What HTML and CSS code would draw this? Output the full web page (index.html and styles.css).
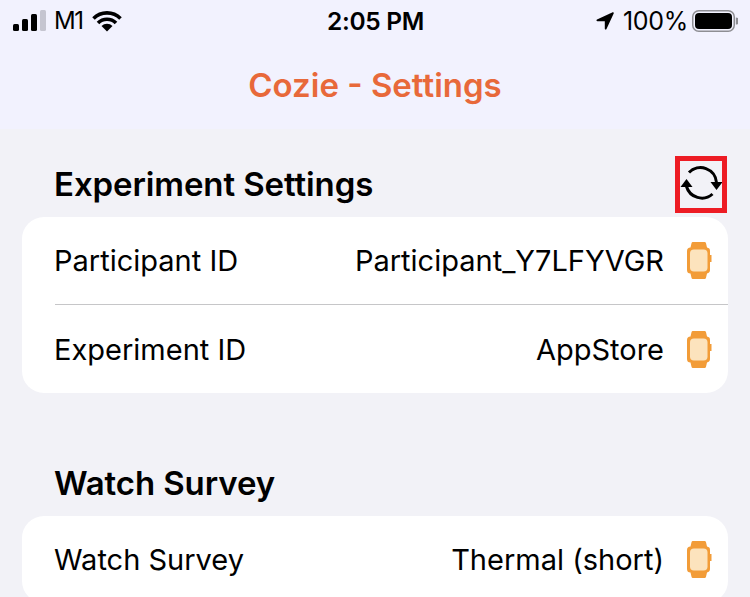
FILE: index.html
```html
<!DOCTYPE html>
<html lang="en">
<head>
    <meta charset="UTF-8">
    <title>Cozie - Settings</title>
    <link rel="stylesheet" href="styles.css">
</head>
<body>
    <svg class="defs" width="0" height="0">
        <symbol id="watch" viewBox="0 0 25 37">
            <path d="M6 0h11.500a1.500 1.500 0 0 1 1.500 1.200l1 4.300a3.500 3.500 0 0 1 3 3.500v4h1.500v7H23v8a3.500 3.500 0 0 1-3 3.500l-1 4.300a1.500 1.500 0 0 1-1.500 1.200H6a1.500 1.500 0 0 1-1.500-1.200l-1-4.300a3.500 3.500 0 0 1-3.500-3.500V9a3.500 3.500 0 0 1 3.500-3.500l1-4.300A1.500 1.500 0 0 1 6 0z" fill="#f29c38"/>
            <rect x="3" y="7.500" width="17.500" height="22" rx="4" fill="#fce3bd"/>
        </symbol>
    </svg>

    <header class="top">
        <div class="status">
            <div class="status-left">
                <svg class="signal" width="33" height="21" viewBox="0 0 33 21">
                    <rect x="0" y="14" width="6" height="7" rx="1.500" fill="#000"/>
                    <rect x="9" y="9" width="6" height="12" rx="1.500" fill="#000"/>
                    <rect x="18" y="4" width="6" height="17" rx="1.500" fill="#000"/>
                    <rect x="27" y="0" width="6" height="21" rx="1.500" fill="#c5c5d0"/>
                </svg>
                <span class="carrier">M1</span>
                <svg class="wifi" width="30" height="22" viewBox="0 0 30 22">
                    <path d="M1.500 8.500a19 19 0 0 1 27 0M6 13a12.600 12.600 0 0 1 18 0" fill="none" stroke="#000" stroke-width="3.600"/>
                    <path d="M15 21.500l-5.500-5.500a7.800 7.800 0 0 1 11 0z" fill="#000"/>
                </svg>
            </div>
            <span class="clock">2:05 PM</span>
            <div class="status-right">
                <svg class="arrow" width="18" height="18" viewBox="0 0 18 18">
                    <path d="M17.500 0.500a0.600 0.600 0 0 0-0.800-0.300L1 7.500c-1 0.500-0.700 1.700 0.300 1.700H8.800v7.500c0 1 1.200 1.300 1.700 0.300L17.800 1.300z" fill="#000"/>
                </svg>
                <span class="percent">100%</span>
                <svg class="battery" width="46" height="22" viewBox="0 0 46 22">
                    <rect x="0.750" y="0.750" width="41.500" height="20.500" rx="6" fill="none" stroke="#8e8e93" stroke-width="1.500"/>
                    <rect x="3" y="3" width="37" height="16" rx="4" fill="#000"/>
                    <path d="M43.800 7.500v7a3.500 3.500 0 0 0 0-7z" fill="#8e8e93"/>
                </svg>
            </div>
        </div>
        <h1 class="title">Cozie - Settings</h1>
    </header>

    <main class="content">
        <section class="group">
            <div class="group-head">
                <h2>Experiment Settings</h2>
                <div class="sync">
                    <svg viewBox="0 0 42 42">
                        <path d="M9 9.500A16 16 0 0 1 36.500 19.500M32.500 31A16 16 0 0 1 6.500 23.500" fill="none" stroke="#000" stroke-width="3"/>
                        <path d="M30.500 19h12l-6 8zM0.500 24h12l-6-8z" fill="#000"/>
                    </svg>
                </div>
            </div>
            <div class="card">
                <div class="row">
                    <span class="label">Participant ID</span>
                    <span class="value">Participant_Y7LFYVGR</span>
                    <svg class="watch"><use href="#watch"/></svg>
                </div>
                <div class="row">
                    <span class="label">Experiment ID</span>
                    <span class="value">AppStore</span>
                    <svg class="watch"><use href="#watch"/></svg>
                </div>
            </div>
        </section>

        <section class="group">
            <div class="group-head">
                <h2>Watch Survey</h2>
            </div>
            <div class="card">
                <div class="row">
                    <span class="label">Watch Survey</span>
                    <span class="value">Thermal (short)</span>
                    <svg class="watch"><use href="#watch"/></svg>
                </div>
            </div>
        </section>
    </main>
</body>
</html>
```

FILE: styles.css
```css
html, body {
    margin: 0;
    height: 597px;
    overflow: hidden;
}
body {
    font-family: 'Inter', 'Liberation Sans', sans-serif;
    background-color: #f2f2f7;
    color: #000;
}
.defs {
    position: absolute;
}
.top {
    height: 129px;
    background-color: #f2f2fe;
}
.status {
    height: 41px;
    padding: 0 12px 0 13px;
    display: grid;
    grid-template-columns: 1fr auto 1fr;
    align-items: center;
    font-size: 25px;
    letter-spacing: -0.3px;
}
.status-left {
    display: flex;
    align-items: center;
    gap: 8px;
}
.status-right {
    display: flex;
    align-items: center;
    justify-content: flex-end;
    gap: 4px;
}
.carrier {
    letter-spacing: -1.5px;
    font-size: 24px;
    margin-right: 2px;
}
.clock {
    font-weight: 600;
    font-size: 24.500px;
}
.arrow {
    margin-right: 5px;
}
.title {
    margin: 0;
    padding-top: 23px;
    text-align: center;
    font-size: 33px;
    line-height: 42px;
    font-weight: 600;
    color: #e8693a;
}
.content {
    padding: 0 22px;
}
.group {
    margin-bottom: 35px;
}
.group-head {
    box-sizing: border-box;
    height: 88px;
    padding: 22px 0 0 32px;
    display: flex;
    align-items: center;
    justify-content: space-between;
}
h2 {
    margin: 0;
    font-size: 33px;
    font-weight: 600;
    letter-spacing: -0.1px;
}
.sync {
    box-sizing: border-box;
    width: 52px;
    height: 57px;
    margin-right: 1px;
    border: 5px solid #ed1c24;
    display: flex;
    align-items: center;
    justify-content: center;
}
.sync svg {
    flex: none;
    width: 42px;
    height: 42px;
}
.card {
    background: #fff;
    border-radius: 22px;
    padding-left: 33px;
}
.row {
    height: 87px;
    display: flex;
    align-items: center;
    padding-right: 16px;
    font-size: 29px;
}
.row + .row {
    border-top: 1px solid #c6c6c8;
    padding-top: 1px;
}
.label {
    flex: 1;
    margin-left: -1px;
}
.watch {
    width: 25px;
    height: 37px;
    margin-left: 23px;
}
```
